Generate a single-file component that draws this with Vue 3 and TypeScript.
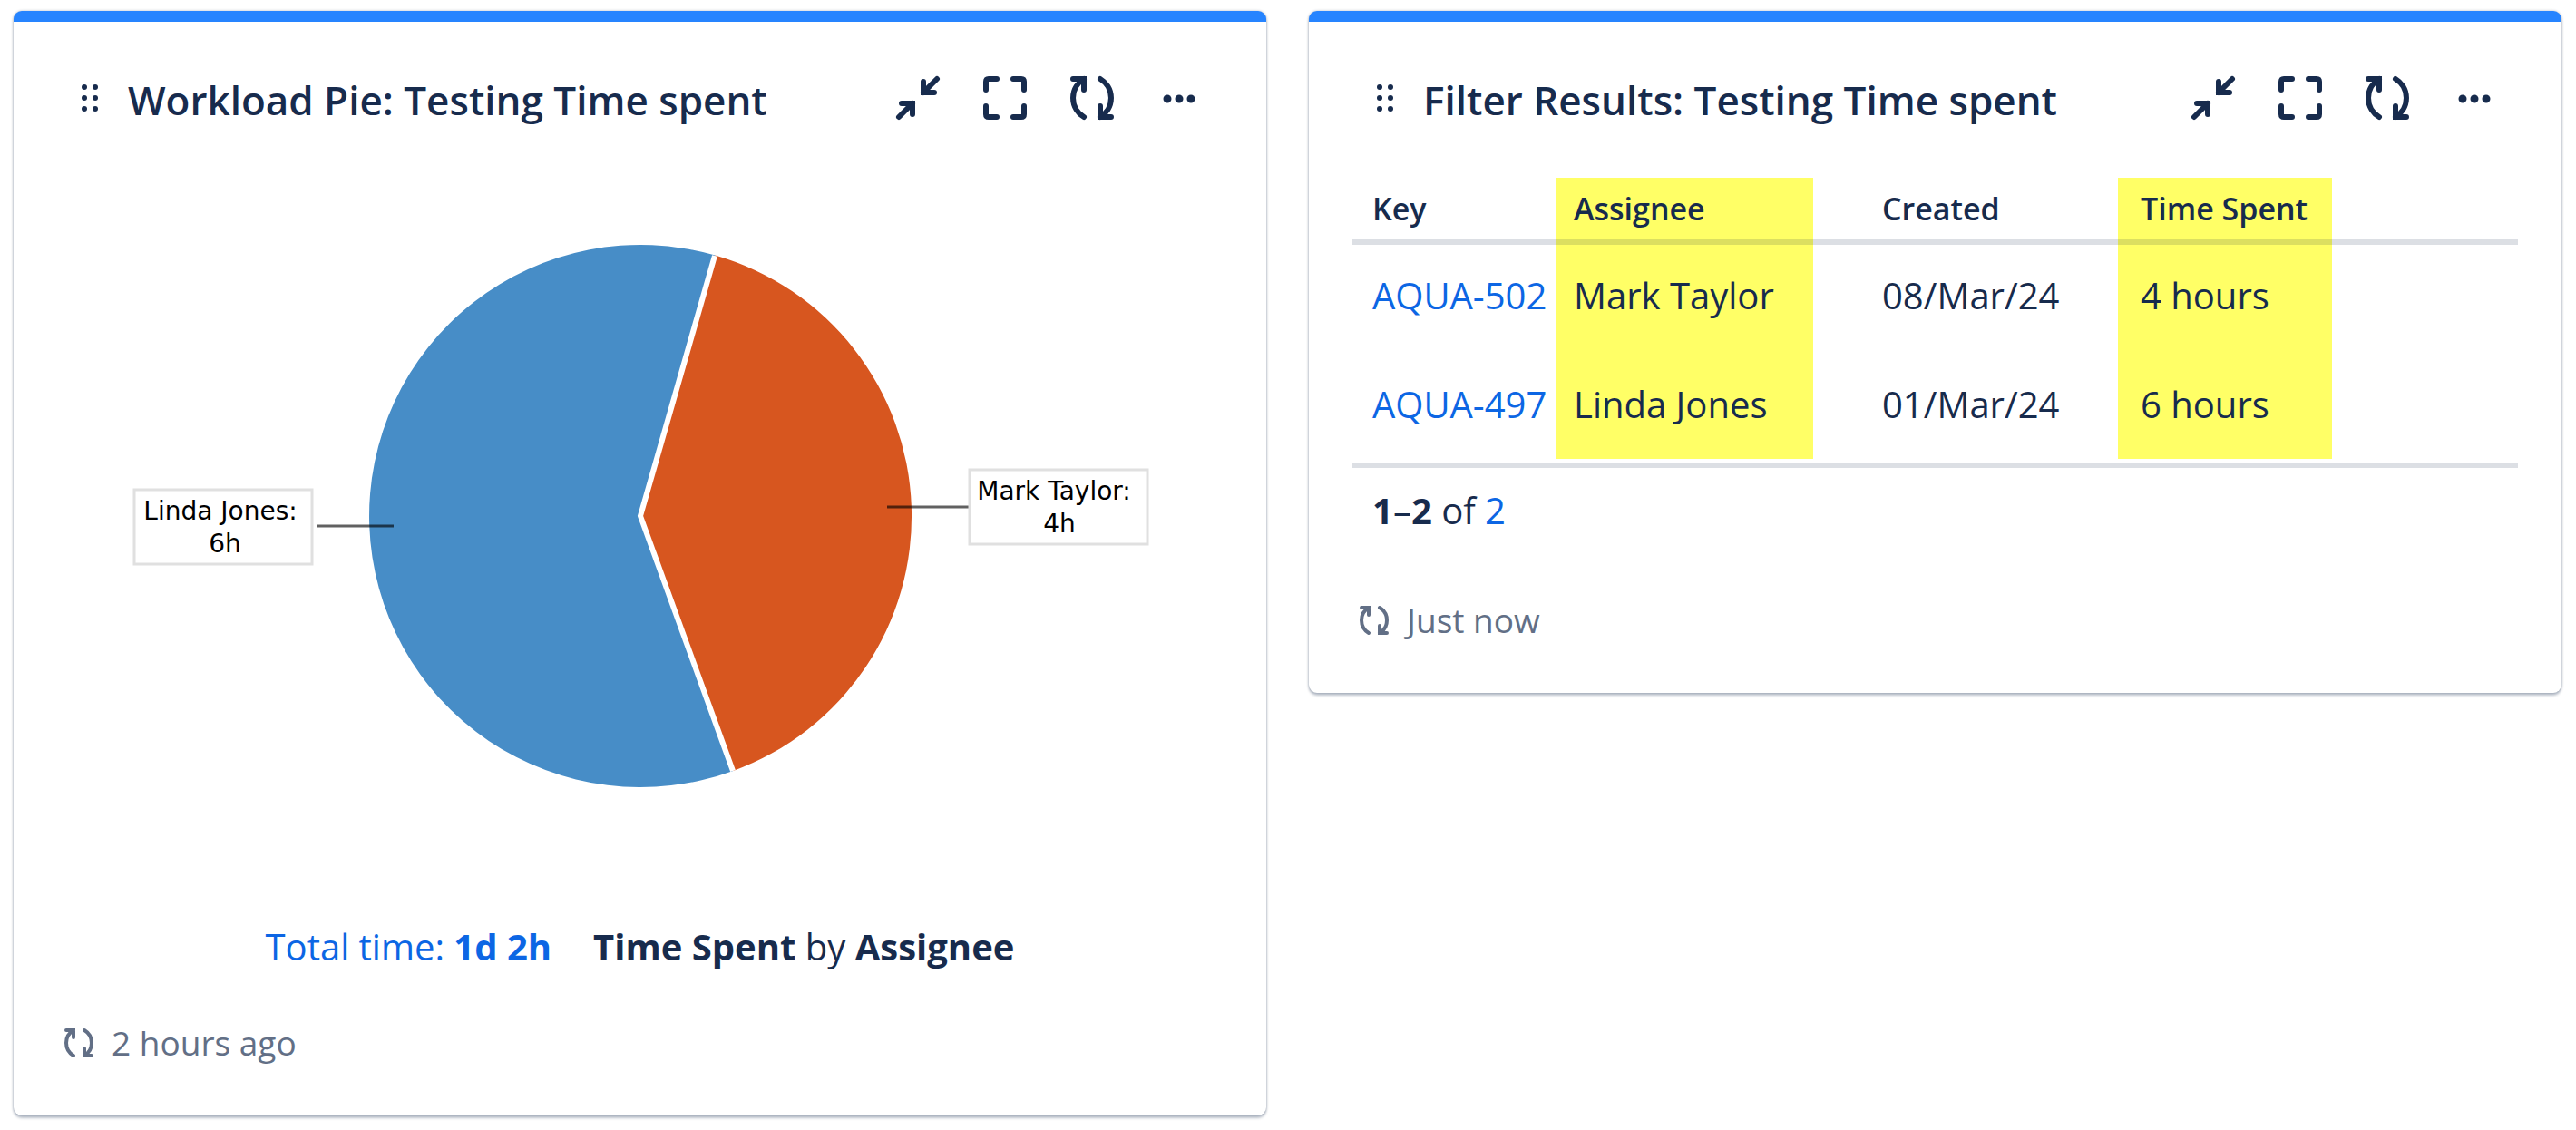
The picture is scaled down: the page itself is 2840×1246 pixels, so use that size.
<script setup lang="ts">
interface Issue {
  key: string
  assignee: string
  created: string
  timeSpent: string
}

interface Slice {
  name: string
  value: string
  path: string
  color: string
  box: { x: number; y: number }
  nameX: number
  valueX: number
  leader: { x1: number; x2: number; y: number }
}

interface Action {
  label: string
  paths: string[]
}

const REFRESH = [
  'M15 15H27V27M27 57A24.4 24.4 0 0 1 27 15',
  'M57 57H45V45M45 15A24.4 24.4 0 0 1 45 57',
]

const actions: Action[] = [
  { label: 'Minimize', paths: ['M42 18V30H54M57 15L42 30', 'M18 42H30V54M30 42L15 57'] },
  {
    label: 'Maximize',
    paths: ['M15 27V18Q15 15 18 15H27', 'M45 15H54Q57 15 57 18V27', 'M57 45V54Q57 57 54 57H45', 'M27 57H18Q15 57 15 54V45'],
  },
  { label: 'Refresh', paths: REFRESH },
]

const issues: Issue[] = [
  { key: 'AQUA-502', assignee: 'Mark Taylor', created: '08/Mar/24', timeSpent: '4 hours' },
  { key: 'AQUA-497', assignee: 'Linda Jones', created: '01/Mar/24', timeSpent: '6 hours' },
]

const CX = 600
const CY = 381
const R = 299

// Angles are in degrees, clockwise from twelve o'clock.
function wedge(from: number, to: number): string {
  const point = (deg: number) => {
    const a = (deg * Math.PI) / 180
    return `${(CX + R * Math.sin(a)).toFixed(1)} ${(CY - R * Math.cos(a)).toFixed(1)}`
  }
  return `M${CX} ${CY}L${point(from)}A${R} ${R} 0 ${to - from > 180 ? 1 : 0} 1 ${point(to)}Z`
}

const slices: Slice[] = [
  {
    name: 'Linda Jones:',
    value: '6h',
    path: wedge(160, 376),
    color: '#478dc7',
    box: { x: 42, y: 352 },
    nameX: 137,
    valueX: 142,
    leader: { x1: 244, x2: 328, y: 392 },
  },
  {
    name: 'Mark Taylor:',
    value: '4h',
    path: wedge(16, 160),
    color: '#d7561f',
    box: { x: 963, y: 330 },
    nameX: 1056,
    valueX: 1062,
    leader: { x1: 872, x2: 962, y: 371 },
  },
]
</script>

<template>
  <main class="dashboard">
    <section class="gadget">
      <header class="head">
        <svg class="grip" viewBox="0 0 24 36" aria-hidden="true">
          <template v-for="y in [6, 18, 30]" :key="y">
            <circle cx="6" :cy="y" r="3" />
            <circle cx="18" :cy="y" r="3" />
          </template>
        </svg>
        <h2 class="title">Workload Pie: Testing Time spent</h2>
        <div class="actions">
          <button v-for="a in actions" :key="a.label" type="button" :aria-label="a.label">
            <svg class="icon" viewBox="0 0 72 72"><path v-for="d in a.paths" :key="d" :d="d" /></svg>
          </button>
          <button type="button" aria-label="More actions">
            <svg class="dots" viewBox="0 0 72 72">
              <circle v-for="x in [23, 36, 49]" :key="x" :cx="x" cy="37" r="4.5" />
            </svg>
          </button>
        </div>
      </header>

      <svg class="chart" viewBox="0 0 1200 800" role="img" aria-label="Time spent by assignee">
        <path v-for="s in slices" :key="s.name" :d="s.path" :fill="s.color" />
        <path class="divider" d="M682 94L600 381L702 662" />
        <g v-for="s in slices" :key="s.value">
          <line class="leader" :x1="s.leader.x1" :x2="s.leader.x2" :y1="s.leader.y" :y2="s.leader.y" />
          <rect class="label-box" :x="s.box.x" :y="s.box.y" width="196" height="82" />
          <text class="label" :x="s.nameX" :y="s.box.y + 33">{{ s.name }}</text>
          <text class="label" :x="s.valueX" :y="s.box.y + 69">{{ s.value }}</text>
        </g>
      </svg>

      <div class="legend">
        <a href="#total">Total time: <strong>1d 2h</strong></a>
        <span><strong>Time Spent</strong> by <strong>Assignee</strong></span>
      </div>

      <footer class="updated">
        <svg class="icon small" viewBox="0 0 72 72" aria-hidden="true"><path v-for="d in REFRESH" :key="d" :d="d" /></svg>
        <span>2 hours ago</span>
      </footer>
    </section>

    <section class="gadget">
      <header class="head">
        <svg class="grip" viewBox="0 0 24 36" aria-hidden="true">
          <template v-for="y in [6, 18, 30]" :key="y">
            <circle cx="6" :cy="y" r="3" />
            <circle cx="18" :cy="y" r="3" />
          </template>
        </svg>
        <h2 class="title">Filter Results: Testing Time spent</h2>
        <div class="actions">
          <button v-for="a in actions" :key="a.label" type="button" :aria-label="a.label">
            <svg class="icon" viewBox="0 0 72 72"><path v-for="d in a.paths" :key="d" :d="d" /></svg>
          </button>
          <button type="button" aria-label="More actions">
            <svg class="dots" viewBox="0 0 72 72">
              <circle v-for="x in [23, 36, 49]" :key="x" :cx="x" cy="37" r="4.5" />
            </svg>
          </button>
        </div>
      </header>

      <div class="results">
        <table>
          <thead>
            <tr>
              <th class="key" scope="col">Key</th>
              <th class="assignee marked" scope="col">Assignee</th>
              <th class="created" scope="col">Created</th>
              <th class="time marked" scope="col">Time Spent</th>
              <td class="rest"></td>
            </tr>
          </thead>
          <tbody>
            <tr v-for="i in issues" :key="i.key">
              <td class="key"><a :href="'#' + i.key">{{ i.key }}</a></td>
              <td class="assignee marked">{{ i.assignee }}</td>
              <td class="created">{{ i.created }}</td>
              <td class="time marked">{{ i.timeSpent }}</td>
              <td class="rest"></td>
            </tr>
          </tbody>
        </table>
      </div>
      <p class="count"><strong>1</strong>–<strong>2</strong> of <a href="#all">2</a></p>

      <footer class="updated">
        <svg class="icon small" viewBox="0 0 72 72" aria-hidden="true"><path v-for="d in REFRESH" :key="d" :d="d" /></svg>
        <span>Just now</span>
      </footer>
    </section>
  </main>
</template>

<style>
body {
  background: #fff;
}
</style>

<style scoped>
.dashboard {
  display: grid;
  grid-template-columns: minmax(0, 1fr) minmax(0, 1fr);
  align-items: start;
  gap: 47px;
  padding: 12px 16px 16px 15px;
  font: 400 40px/56px 'Open Sans', 'Noto Sans', sans-serif;
  color: #172b4d;
}

.gadget {
  display: flex;
  flex-direction: column;
  border-radius: 9px;
  background: linear-gradient(#2684ff, #2684ff) top / 100% 12px no-repeat #fff;
  box-shadow: 0 3px 3px rgba(9, 30, 66, 0.25), 0 0 3px rgba(9, 30, 66, 0.31);
  padding: 48px 48px 56px;
}

.head {
  display: flex;
  align-items: center;
  height: 96px;
  padding-left: 24px;
}

.grip {
  flex: none;
  width: 24px;
  height: 36px;
  margin-right: 30px;
  fill: #172b4d;
}

.title {
  flex: 1;
  margin: 0;
  padding-top: 4px;
  white-space: nowrap;
  font-size: 44px;
  font-weight: 600;
  line-height: 64px;
}

.actions {
  display: flex;
}

button {
  display: grid;
  place-items: center;
  width: 96px;
  height: 96px;
  padding: 0;
  border: 0;
  background: none;
  color: #172b4d;
  cursor: pointer;
}

.icon,
.dots {
  display: block;
  width: 72px;
  height: 72px;
}

.icon {
  fill: none;
  stroke: currentColor;
  stroke-width: 6;
  stroke-linecap: round;
}

.dots {
  fill: currentColor;
}

.icon.small {
  width: 48px;
  height: 48px;
}

.chart {
  align-self: center;
  width: 100%;
  max-width: 1200px;
  margin-top: 32px;
}

.divider {
  fill: none;
  stroke: #fff;
  stroke-width: 6;
}

.leader {
  stroke: #000;
  stroke-opacity: 0.62;
  stroke-width: 3;
}

.label-box {
  fill: #fff;
  stroke: #e0e0e0;
  stroke-width: 3;
}

.label {
  font-family: 'DejaVu Sans', sans-serif;
  font-size: 28px;
  text-anchor: middle;
  fill: #000;
}

a {
  color: #0c66e4;
  text-decoration: none;
}

strong {
  font-weight: 700;
}

.legend {
  display: flex;
  justify-content: center;
  gap: 46px;
  margin-top: 28px;
}

.updated {
  display: flex;
  align-items: center;
  gap: 12px;
  margin-top: 54px;
  font-size: 37px;
  line-height: 48px;
  color: #626f86;
}

.results {
  margin-top: 40px;
  padding-bottom: 4px;
  border-bottom: 6px solid #dcdfe4;
}

table {
  width: 100%;
  table-layout: fixed;
  border-spacing: 0;
}

th,
td {
  padding: 28px 0 36px 22px;
  text-align: left;
  white-space: nowrap;
}

tbody tr:last-child td {
  padding-bottom: 32px;
}

thead th,
thead td {
  padding-top: 6px;
  padding-bottom: 6px;
  border-bottom: 6px solid rgba(9, 30, 66, 0.14);
  font-size: 34px;
  font-weight: 600;
}

.marked {
  background: #ff6;
}

.key {
  width: 202px;
}

.assignee {
  width: 264px;
}

.created {
  width: 260px;
}

.time {
  width: 211px;
}

tr > .assignee {
  padding-left: 20px;
}

tr > .created {
  padding-left: 76px;
}

tr > .time {
  padding-left: 25px;
}

.count {
  margin: 19px 0 15px;
  padding-left: 22px;
}
</style>
